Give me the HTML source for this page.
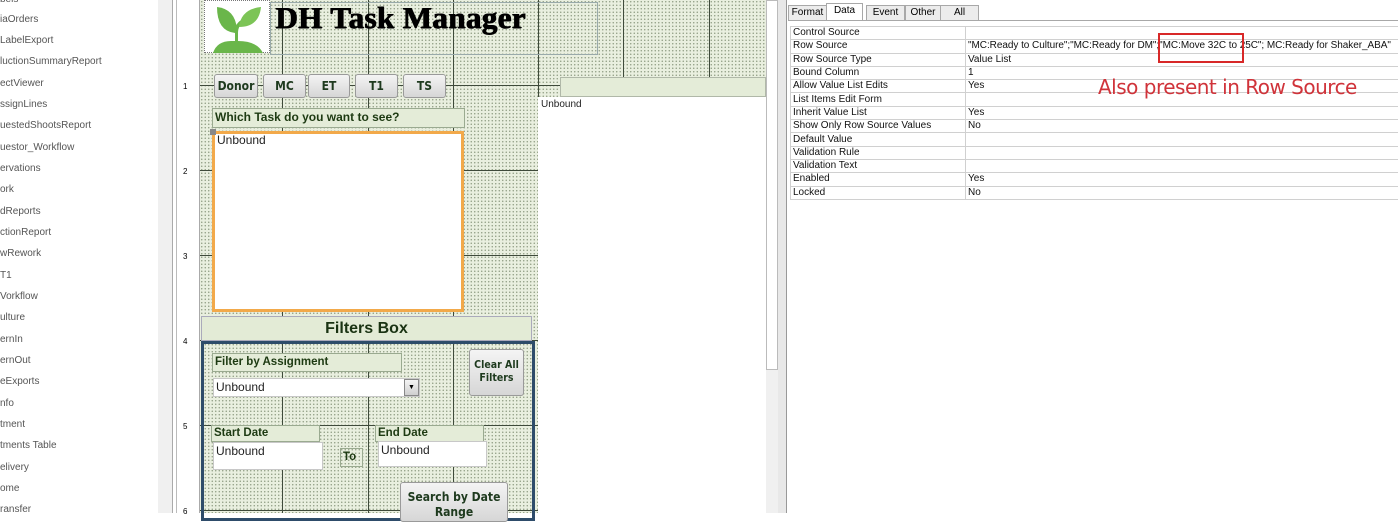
<!DOCTYPE html>
<html><head><meta charset="utf-8"><style>
*{margin:0;padding:0;box-sizing:border-box}
body{width:1398px;height:513px;overflow:hidden;background:#fff;position:relative;font-family:"Liberation Sans",sans-serif}
.a{position:absolute}
.nav{font-size:10px;color:#555;left:0;white-space:nowrap}
.dots{background-color:#e9efdf;background-image:radial-gradient(circle,#8e9c82 0.6px,transparent 0.8px);background-size:3.5px 3.5px}
.vl{position:absolute;width:1px;background:#3e4a3a;top:0}
.hl{position:absolute;height:1px;background:#3e4a3a;left:200px;width:338px}
.btn{position:absolute;background:linear-gradient(#f4f4f4,#d6d6d6);border:1px solid #9a9a9a;border-radius:3px;font-size:12px;font-weight:bold;color:#1e3a1e;text-align:center;font-family:"DejaVu Sans Condensed","Liberation Sans",sans-serif}
.lbl{position:absolute;background:#e4ecd8;border:1px solid #9aaa90;font-weight:bold;color:#1d3a12;font-size:11.5px;padding-left:2px}
.tb{position:absolute;background:#fff;border:1px solid #c8c8c8;font-size:12px;color:#222;padding-left:2px}
table{border-collapse:collapse;font-size:10px;color:#111}
td{border:1px solid #d0d0d0;height:13.3px;padding:0 2px;line-height:12px;white-space:nowrap;overflow:hidden}
.tab{position:absolute;top:5px;height:16px;border:1px solid #a8a8a8;background:#ececec;font-size:10px;text-align:center;line-height:14px}
</style></head><body>
<div class="a nav" style="top:-6px">bels</div>
<div class="a nav" style="top:14px">iaOrders</div>
<div class="a nav" style="top:35px">LabelExport</div>
<div class="a nav" style="top:56px">luctionSummaryReport</div>
<div class="a nav" style="top:78px">ectViewer</div>
<div class="a nav" style="top:99px">ssignLines</div>
<div class="a nav" style="top:120px">uestedShootsReport</div>
<div class="a nav" style="top:142px">uestor_Workflow</div>
<div class="a nav" style="top:163px">ervations</div>
<div class="a nav" style="top:184px">ork</div>
<div class="a nav" style="top:206px">dReports</div>
<div class="a nav" style="top:227px">ctionReport</div>
<div class="a nav" style="top:248px">wRework</div>
<div class="a nav" style="top:270px">T1</div>
<div class="a nav" style="top:291px">Vorkflow</div>
<div class="a nav" style="top:312px">ulture</div>
<div class="a nav" style="top:334px">ernIn</div>
<div class="a nav" style="top:355px">ernOut</div>
<div class="a nav" style="top:376px">eExports</div>
<div class="a nav" style="top:398px">nfo</div>
<div class="a nav" style="top:419px">tment</div>
<div class="a nav" style="top:440px">tments Table</div>
<div class="a nav" style="top:462px">elivery</div>
<div class="a nav" style="top:483px">ome</div>
<div class="a nav" style="top:504px">ransfer</div>
<div class="a" style="left:158px;top:0;width:14px;height:513px;background:#f0f0f0"></div>
<div class="a" style="left:172px;top:0;width:28px;height:513px;background:#fff;border-left:1px solid #aaa;border-right:1px solid #aaa"></div>
<div class="a" style="left:176px;top:0;width:1px;height:513px;background:#bbb"></div>
<div class="a" style="left:183px;top:82px;font-size:8px">1</div>
<div class="a" style="left:183px;top:167px;font-size:8px">2</div>
<div class="a" style="left:183px;top:252px;font-size:8px">3</div>
<div class="a" style="left:183px;top:337px;font-size:8px">4</div>
<div class="a" style="left:183px;top:422px;font-size:8px">5</div>
<div class="a" style="left:183px;top:507px;font-size:8px">6</div>
<div class="a dots" style="left:200px;top:0;width:338px;height:513px"></div>
<div class="a dots" style="left:538px;top:0;width:228px;height:97px"></div>
<div class="vl" style="left:282px;height:513px"></div>
<div class="vl" style="left:368px;height:513px"></div>
<div class="vl" style="left:453px;height:513px"></div>
<div class="vl" style="left:538px;height:513px"></div>
<div class="vl" style="left:623px;height:77px"></div>
<div class="vl" style="left:709px;height:77px"></div>
<div class="hl" style="top:85px;width:566px"></div>
<div class="hl" style="top:170px"></div>
<div class="hl" style="top:255px"></div>
<div class="hl" style="top:340px"></div>
<div class="hl" style="top:425px"></div>
<div class="hl" style="top:510px"></div>
<div class="a" style="left:538px;top:97px;width:228px;height:416px;background:#fff"></div>
<div class="a" style="left:560px;top:77px;width:206px;height:20px;background:#e4ecd8;border:1px solid #b0b8a8"></div>
<div class="a" style="left:541px;top:99px;font-size:10px;color:#222">Unbound</div>
<div class="a" style="left:270px;top:2px;width:328px;height:53px;border:1px solid #9aa"></div>
<div class="a" style="left:204px;top:0;width:66px;height:53px;background:#fff;border:1px dotted #777">
<svg width="66" height="53" viewBox="0 0 66 53"><path d="M8 52 Q12 40 26 40 L30 40 L30 30 Q30 22 38 18 L40 20 Q33 24 33 32 L33 40 Q52 40 58 52 Z" fill="#6ab64a"/><path d="M30 32 Q12 30 12 6 Q30 8 32 28 Z" fill="#6ab64a"/><path d="M34 26 Q36 8 56 6 Q54 26 34 26 Z" fill="#7cc456"/></svg></div>
<div class="a" style="left:275px;top:0px;font-family:'Liberation Serif',serif;font-weight:bold;font-size:31px;color:#000;letter-spacing:0.4px;white-space:nowrap;text-shadow:1px 0 0 #000,0.5px 0.5px 0 #000">DH Task Manager</div>
<div class="btn" style="left:214px;top:74px;width:44px;height:24px;line-height:22px">Donor</div>
<div class="btn" style="left:263px;top:74px;width:43px;height:24px;line-height:22px">MC</div>
<div class="btn" style="left:308px;top:74px;width:42px;height:24px;line-height:22px">ET</div>
<div class="btn" style="left:355px;top:74px;width:43px;height:24px;line-height:22px">T1</div>
<div class="btn" style="left:403px;top:74px;width:43px;height:24px;line-height:22px">TS</div>
<div class="lbl" style="left:212px;top:108px;width:253px;height:20px;line-height:17px;font-size:12px">Which Task do you want to see?</div>
<div class="a" style="left:212px;top:131px;width:252px;height:181px;background:#fff;border:3px solid #f2a94a;font-size:12px;padding-left:2px;line-height:13px;color:#222">Unbound</div>
<div class="a" style="left:210px;top:129px;width:6px;height:6px;background:#888"></div>
<div class="a" style="left:201px;top:316px;width:331px;height:25px;background:#e3ebd6;border:1px solid #aab;text-align:center;font-weight:bold;font-size:16px;line-height:23px;color:#1a3312">Filters Box</div>
<div class="a" style="left:201px;top:341px;width:334px;height:180px;border:3px solid #2e4c6a"></div>
<div class="lbl" style="left:212px;top:353px;width:190px;height:19px;line-height:16px">Filter by Assignment</div>
<div class="tb" style="left:213px;top:378px;width:207px;height:19px;line-height:17px">Unbound</div>
<div class="a" style="left:404px;top:379px;width:15px;height:17px;background:linear-gradient(#f4f4f4,#cfcfcf);border:1px solid #888;font-size:7px;text-align:center;line-height:15px">▼</div>
<div class="btn" style="left:469px;top:349px;width:55px;height:47px;font-size:10.5px;line-height:13px;padding-top:9px">Clear All<br>Filters</div>
<div class="lbl" style="left:211px;top:425px;width:109px;height:17px;line-height:14px">Start Date</div>
<div class="tb" style="left:213px;top:442px;width:110px;height:28px;line-height:16px">Unbound</div>
<div class="lbl" style="left:340px;top:448px;width:23px;height:19px;line-height:17px;background:transparent">To</div>
<div class="lbl" style="left:375px;top:425px;width:109px;height:17px;line-height:14px">End Date</div>
<div class="tb" style="left:378px;top:441px;width:109px;height:26px;line-height:16px">Unbound</div>
<div class="btn" style="left:400px;top:482px;width:108px;height:40px;font-size:12px;line-height:15px;padding-top:7px">Search by Date<br>Range</div>
<div class="a" style="left:766px;top:0;width:12px;height:370px;background:#fff;border:1px solid #bbb"></div>
<div class="a" style="left:766px;top:370px;width:12px;height:143px;background:#f0f0f0"></div>
<div class="a" style="left:778px;top:0;width:9px;height:513px;background:#e8e8e8;border-right:1px solid #999"></div>
<div class="tab" style="left:788px;width:39px">Format</div>
<div class="tab" style="left:826px;top:3px;width:37px;height:18px;background:#fff;border-bottom:none">Data</div>
<div class="tab" style="left:866px;width:39px">Event</div>
<div class="tab" style="left:905px;width:36px">Other</div>
<div class="tab" style="left:940px;width:39px">All</div>
<div class="a" style="left:788px;top:20px;width:610px;height:1px;background:#a8a8a8"></div>
<div class="a" style="left:790px;top:26px">
<table style="width:620px">
<tr><td style="width:175px">Control Source</td><td></td></tr>
<tr><td>Row Source</td><td style="font-size:10px;letter-spacing:-0.05px">"MC:Ready to Culture";"MC:Ready for DM";"MC:Move 32C to 25C"; MC:Ready for Shaker_ABA"</td></tr>
<tr><td>Row Source Type</td><td>Value List</td></tr>
<tr><td>Bound Column</td><td>1</td></tr>
<tr><td>Allow Value List Edits</td><td>Yes</td></tr>
<tr><td>List Items Edit Form</td><td></td></tr>
<tr><td>Inherit Value List</td><td>Yes</td></tr>
<tr><td>Show Only Row Source Values</td><td>No</td></tr>
<tr><td>Default Value</td><td></td></tr>
<tr><td>Validation Rule</td><td></td></tr>
<tr><td>Validation Text</td><td></td></tr>
<tr><td>Enabled</td><td>Yes</td></tr>
<tr><td>Locked</td><td>No</td></tr>
</table></div>
<div class="a" style="left:1158px;top:33px;width:86px;height:30px;border:2px solid #d82828"></div>
<div class="a" style="left:1098px;top:75px;font-size:20px;color:#d0333a;font-family:'DejaVu Sans','Liberation Sans',sans-serif;letter-spacing:-0.5px">Also present in Row Source</div>
</body></html>
